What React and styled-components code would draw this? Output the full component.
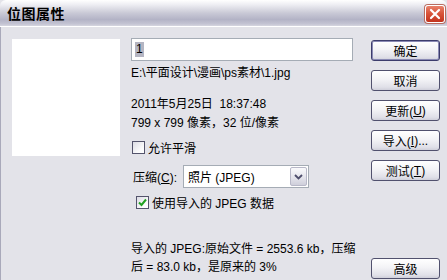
import React from "react";
import styled, { createGlobalStyle } from "styled-components";

const GlobalStyle = createGlobalStyle`
    html, body {
        margin: 0;
        padding: 0;
        background: #e3e3e9;
    }
    body {
        font-family: "Liberation Sans", "Noto Sans CJK SC", sans-serif;
        font-size: 12px;
        color: #000;
    }
`;

const App = () => {
    return (
        <>
            <GlobalStyle />
            <Window>
                <TitleBar>
                    <Title>位图属性</Title>
                    <CloseButton>
                        <svg width="12" height="12" viewBox="0 0 12 12">
                            <path d="M2 2 L10 10 M10 2 L2 10" stroke="#fff" strokeWidth="2.2" strokeLinecap="round" />
                        </svg>
                    </CloseButton>
                </TitleBar>
                <Body>
                    <Preview />
                    <Main>
                        <NameField>
                            <Selected>1</Selected>
                        </NameField>
                        <Line $top={4}>E:\平面设计\漫画\ps素材\1.jpg</Line>
                        <Line $top={15}>2011年5月25日&nbsp;&nbsp;18:37:48</Line>
                        <Line $top={3}>799 x 799 像素，32 位/像素</Line>
                        <CheckRow $top={8} $indent={1}>
                            <CheckBox />
                            允许平滑
                        </CheckRow>
                        <SelectRow>
                            <span>压缩(<u>C</u>):</span>
                            <Select>
                                <SelectValue>照片 (JPEG)</SelectValue>
                                <SelectArrow>
                                    <svg width="9" height="6" viewBox="0 0 9 6">
                                        <path d="M1 1 L4.5 4.5 L8 1" stroke="#4d4d6b" strokeWidth="1.8" fill="none" />
                                    </svg>
                                </SelectArrow>
                            </Select>
                        </SelectRow>
                        <CheckRow $top={6} $indent={5}>
                            <CheckBox>
                                <svg width="9" height="9" viewBox="0 0 9 9">
                                    <path d="M1 4.5 L3.5 7 L8 1.5" stroke="#21a121" strokeWidth="2" fill="none" />
                                </svg>
                            </CheckBox>
                            使用导入的 JPEG 数据
                        </CheckRow>
                        <Summary>
                            导入的 JPEG:原始文件 = 2553.6 kb，压缩<br />
                            后 = 83.0 kb，是原来的 3%
                        </Summary>
                    </Main>
                    <ButtonColumn>
                        <Button $primary>确定</Button>
                        <Button>取消</Button>
                        <Button>更新(<u>U</u>)</Button>
                        <Button>导入(<u>I</u>)...</Button>
                        <Button>测试(<u>T</u>)</Button>
                        <Button $bottom>高级</Button>
                    </ButtonColumn>
                </Body>
            </Window>
        </>
    );
};

const Window = styled.div`
    width: 447px;
    height: 280px;
    overflow: hidden;
    display: flex;
    flex-direction: column;
`;

const TitleBar = styled.div`
    height: 27px;
    flex-shrink: 0;
    display: flex;
    align-items: center;
    justify-content: space-between;
    padding: 0 2px 0 7px;
    box-sizing: border-box;
    border-radius: 6px 6px 0 0;
    background: linear-gradient(
        to bottom,
        #ffffff 0%,
        #eeeef3 18%,
        #c9c9d6 50%,
        #b3b3c6 75%,
        #c4c4d3 92%,
        #d6d6e0 100%
    );
    border-bottom: 1px solid #ffffff;
`;

const Title = styled.span`
    font-family: "Noto Sans CJK SC", sans-serif;
    font-weight: 700;
    font-size: 14px;
    letter-spacing: 0.5px;
    color: #000;
`;

const CloseButton = styled.div`
    width: 20px;
    height: 18px;
    margin-top: 2px;
    display: flex;
    align-items: center;
    justify-content: center;
    box-sizing: border-box;
    border: 1px solid #fff;
    border-radius: 3px;
    background: linear-gradient(to bottom, #e8826c 0%, #d9553b 45%, #c2331e 100%);
    box-shadow: 0 0 0 1px #b96c60;
`;

const Body = styled.div`
    flex: 1;
    display: flex;
    padding: 11px 0 0 11px;
    border-left: 1px solid #a9a9ba;
    background: #e3e3e9;
`;

const Preview = styled.div`
    width: 108px;
    height: 117px;
    margin-top: 1px;
    background: #fff;
    flex-shrink: 0;
`;

const Main = styled.div`
    width: 222px;
    margin-left: 11px;
    display: flex;
    flex-direction: column;
`;

const NameField = styled.div`
    height: 23px;
    box-sizing: border-box;
    border: 1px solid #a5acb5;
    padding: 0 3px;
    background: #fff;
    display: flex;
    align-items: center;
`;

const Selected = styled.span`
    background: #b4b5c2;
    padding: 0 1px;
    line-height: 15px;
`;

const Line = styled.div`
    margin-top: ${p => p.$top}px;
    height: 16px;
    line-height: 16px;
    white-space: nowrap;
    color: #000;
`;

const CheckRow = styled.label`
    margin-top: ${p => p.$top}px;
    padding-left: ${p => p.$indent}px;
    height: 16px;
    display: flex;
    align-items: center;
    gap: 3px;
    white-space: nowrap;
`;

const CheckBox = styled.span`
    width: 13px;
    height: 13px;
    box-sizing: border-box;
    border: 1px solid #54546c;
    background: linear-gradient(135deg, #dcdce4 0%, #fbfbfc 70%, #ffffff 100%);
    display: flex;
    align-items: center;
    justify-content: center;
`;

const SelectRow = styled.div`
    margin-top: 10px;
    padding-left: 2px;
    display: flex;
    align-items: center;
    gap: 6px;
    white-space: nowrap;
`;

const Select = styled.div`
    width: 126px;
    height: 23px;
    box-sizing: border-box;
    border: 1px solid #a5acb5;
    background: #fff;
    display: flex;
    align-items: center;
    padding: 1px;
`;

const SelectValue = styled.span`
    flex: 1;
    padding-left: 3px;
`;

const SelectArrow = styled.span`
    width: 17px;
    height: 19px;
    box-sizing: border-box;
    border: 1px solid #b8b8c8;
    border-radius: 2px;
    background: linear-gradient(to bottom, #fafafc 0%, #e2e2ea 60%, #cfcfdb 100%);
    display: flex;
    align-items: center;
    justify-content: center;
`;

const Summary = styled.div`
    margin-top: 30px;
    line-height: 18px;
    white-space: nowrap;
`;

const ButtonColumn = styled.div`
    margin-left: 18px;
    padding-top: 2px;
    display: flex;
    flex-direction: column;
    gap: 9px;
    height: 239px;
`;

const Button = styled.div`
    width: 69px;
    height: 21px;
    box-sizing: border-box;
    border: 1px solid ${p => (p.$primary ? "#3c3c6c" : "#51516e")};
    border-radius: 3px;
    background: linear-gradient(to bottom, #ffffff 0%, #f3f3f6 45%, #e0e0e8 85%, #cfcfda 100%);
    box-shadow: ${p => (p.$primary ? "inset 0 0 0 1px #8a8ab4" : "none")};
    display: flex;
    align-items: center;
    justify-content: center;
    white-space: nowrap;
    margin-top: ${p => (p.$bottom ? "auto" : "0")};
`;

export default App;
